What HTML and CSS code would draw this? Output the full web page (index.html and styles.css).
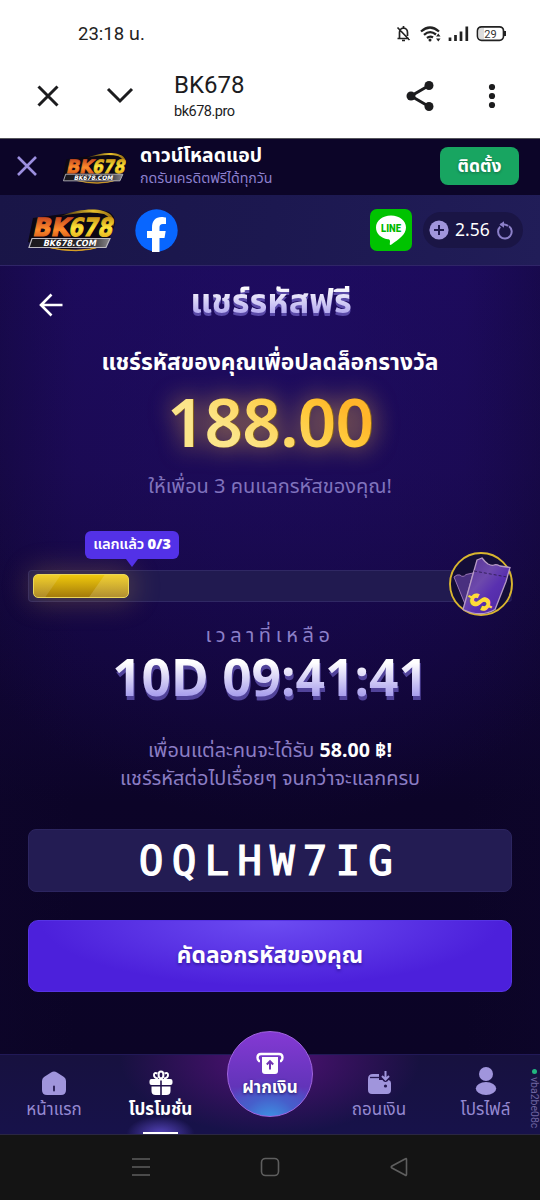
FILE: index.html
```html
<!DOCTYPE html>
<html lang="th">
<head>
<meta charset="utf-8">
<title>BK678</title>
<link rel="stylesheet" href="styles.css">
</head>
<body>
<svg class="defs" width="0" height="0">
  <defs>
    <linearGradient id="orange" x1="0" y1="0" x2="0" y2="1"><stop offset="0" stop-color="#b8361c"/><stop offset=".55" stop-color="#ff8b2c"/><stop offset="1" stop-color="#c8480f"/></linearGradient>
    <linearGradient id="gold" x1="0" y1="0" x2="0" y2="1"><stop offset="0" stop-color="#b87a08"/><stop offset=".5" stop-color="#ffe53a"/><stop offset="1" stop-color="#dd9c10"/></linearGradient>
    <linearGradient id="ring" x1="0" y1="0" x2="1" y2="0"><stop offset="0" stop-color="#3a2a10"/><stop offset=".6" stop-color="#e9c02c"/><stop offset="1" stop-color="#8b6410"/></linearGradient>
    <linearGradient id="plate" x1="0" y1="0" x2="1" y2="0"><stop offset="0" stop-color="#1a181c"/><stop offset=".75" stop-color="#2c2a2e"/><stop offset="1" stop-color="#8a888c"/></linearGradient>
    <linearGradient id="ticket" x1="0" y1="0" x2="1" y2="1"><stop offset="0" stop-color="#533091"/><stop offset=".4" stop-color="#6d49ac"/><stop offset=".6" stop-color="#5930b0"/><stop offset="1" stop-color="#4a25a0"/></linearGradient>
    <symbol id="brand" viewBox="0 0 90 44">
      <path d="M1 34 6 10 44 5Q68-1 82 4q8 5 5 15l-7 17-42 6Z" fill="#0c0713"/>
      <path d="M34 8C56-1 77 0 84 7q5 5 2 12-2-10-9-13Q62 2 34 8Z" fill="url(#ring)"/>
      <path d="M20 39q30 7 56-1-26 9-56 1Z" fill="#e2a725" stroke="#e2a725" stroke-width=".8"/>
      <g font-family="DejaVu Sans" font-weight="700" transform="skewX(-12)" stroke-width="1.100">
        <text x="11" y="28.500" font-size="25" textLength="37" lengthAdjust="spacingAndGlyphs" fill="url(#orange)" stroke="url(#orange)">BK</text>
        <text x="47" y="28.500" font-size="25" textLength="44" lengthAdjust="spacingAndGlyphs" fill="url(#gold)" stroke="url(#gold)">678</text>
      </g>
      <path d="M5 30.500H83L79 39.500H2Z" fill="url(#plate)" stroke="#bbb9c0" stroke-width="1.200"/>
      <g transform="skewX(-12)"><text x="24" y="38" font-family="DejaVu Sans" font-size="8.500" font-weight="700" textLength="53" lengthAdjust="spacingAndGlyphs" fill="#fff">BK678.COM</text></g>
    </symbol>
  </defs>
</svg>

<div class="status">
  <span class="clock">23:18 น.</span>
  <svg class="status-icons" width="112" height="20" viewBox="0 0 112 20" fill="none" stroke="#222">
    <path d="M1.500 14.500H13M3.500 14V8.500Q3.500 4.500 7.500 4q4 .5 4 4.500V12M7.500 2v2M6 16.500h3M1.500 3.500 13.500 16" stroke-width="1.700"/>
    <g stroke-width="2.300"><path d="M25 7.500Q34-.5 43 7.500M28 10.800Q34 5.500 40 10.500M31 14Q34 11.500 37 13.500"/></g>
    <circle cx="34" cy="16" r="1.500" fill="#222" stroke="none"/>
    <path d="M40 12.500 42.300 9.500 44.500 12.500ZM40 14.500 42.300 17.500 44.500 14.500Z" fill="#222" stroke="none"/>
    <path d="M54 17v-3.500M59.500 17v-6M65 17V7.500M70.800 17V2.500" stroke-width="2.700"/>
    <rect x="81.500" y="2.800" width="26" height="13.500" rx="4" stroke-width="1.700" fill="#fff"/>
    <path d="M84 4h4v11h-4q-1.500-1-1.500-4V8q0-3 1.500-4Z" fill="#ddd" stroke="none"/>
    <path d="M109 7v5" stroke-width="2"/>
    <text x="88.300" y="13.500" font-family="Roboto" font-size="11" fill="#333" stroke="none">29</text>
  </svg>
</div>

<div class="browser">
  <svg class="b-close" width="24" height="24" viewBox="0 0 24 24"><path d="M2.500 2.500 21.500 21.500M21.500 2.500 2.500 21.500" class="ink"/></svg>
  <svg class="b-down" width="28" height="24" viewBox="0 0 28 24"><path d="M2 5 14 17 26 5" class="ink"/></svg>
  <div class="site"><div class="site-name">BK678</div><div class="site-url">bk678.pro</div></div>
  <svg class="b-share" width="30" height="32" viewBox="0 0 30 32"><path d="M24 5.500 6 16 24 26.500" class="ink"/><g fill="#1c1c1e"><circle cx="24" cy="5.500" r="4.500"/><circle cx="6" cy="16" r="4.500"/><circle cx="24" cy="26.500" r="4.500"/></g></svg>
  <svg class="b-more" width="8" height="26" viewBox="0 0 8 26" fill="#1c1c1e"><circle cx="4" cy="4" r="3.100"/><circle cx="4" cy="13" r="3.100"/><circle cx="4" cy="22" r="3.100"/></svg>
</div>

<div class="install">
  <svg class="i-close" width="20" height="20" viewBox="0 0 20 20"><path d="M1 1 19 19M19 1 1 19" stroke="#9c8fe0" stroke-width="2.600"/></svg>
  <svg class="i-logo" width="66" height="34"><use href="#brand"/></svg>
  <div class="i-text"><div class="i-title">ดาวน์โหลดแอป</div><div class="i-sub">กดรับเครดิตฟรีได้ทุกวัน</div></div>
  <div class="i-btn">ติดตั้ง</div>
</div>

<div class="header">
  <svg class="h-logo" width="90" height="44"><use href="#brand"/></svg>
  <svg class="h-fb" width="43" height="43" viewBox="0 0 43 43"><circle cx="21.500" cy="21.500" r="21.200" fill="#0866ff"/><path d="M17 43V29H12v-7h5v-3.200C17 11.500 20.500 8 26.500 8c1.700 0 3.500.3 4.500.6V15h-3c-2.700 0-3.500 1.500-3.500 3.500V22h6.200l-1.200 7h-5v14Z" fill="#fff"/></svg>
  <svg class="h-line" width="42" height="42" viewBox="0 0 42 42"><rect width="42" height="42" rx="7" fill="#00c300"/><path d="M21 6.500c8.500 0 15 5.200 15 12 0 7-7.500 12-14.500 17-1.500 1-2 .5-1.600-1.500.5-3-.2-3.300-2-3.700C10.500 29 6 24.500 6 18.500 6 11.700 12.500 6.500 21 6.500Z" fill="#fff"/><text x="11" y="23" font-family="Roboto" font-size="10.500" font-weight="900" textLength="20" lengthAdjust="spacingAndGlyphs" fill="#00b900">LINE</text></svg>
  <div class="wallet">
    <svg width="20" height="20" viewBox="0 0 20 20"><circle cx="10" cy="10" r="9.600" fill="#a095dc"/><path d="M10 5v10M5 10h10" stroke="#201a50" stroke-width="2"/></svg>
    <span class="balance">2.56</span>
    <svg width="18" height="19" viewBox="0 0 18 19" fill="none" stroke="#8c80c9" stroke-width="2"><path d="M4.200 5.800A6.800 6.800 0 1 0 13 5.300M4.500 3.500H8.500Q11 3.800 12 5"/><path d="M8 .3V6.700L3.500 3.500Z" fill="#8c80c9" stroke="none"/></svg>
  </div>
</div>

<main class="promo">
  <div class="title-row">
    <svg class="back" width="24" height="24" viewBox="0 0 24 24" fill="none" stroke="#fff" stroke-width="2.600"><path d="M12.500 1.500 2 12 12.500 22.500M2 12H23.500"/></svg>
    <h1 class="title">แชร์รหัสฟรี</h1>
  </div>
  <h2 class="lead">แชร์รหัสของคุณเพื่อปลดล็อกรางวัล</h2>
  <div class="amount">188.00</div>
  <p class="invite">ให้เพื่อน 3 คนแลกรหัสของคุณ!</p>

  <div class="progress">
    <div class="track"><div class="fill"></div></div>
    <div class="tip">แลกแล้ว <b>0/3</b></div>
    <svg class="prize" width="66" height="66" viewBox="0 0 66 66">
      <circle cx="33" cy="33" r="31" fill="#140d38" stroke="#d9b52f" stroke-width="1.900"/>
      <path d="M6 26q3-3 6-2 3 3 6-.5L25 22 17 53Z" fill="#49307f" stroke="#9874b4"/>
      <path d="M29 9 34 7q3 4 6 6 4 2 6 1 2-1 6 1l10 1.500-4 14L47 58.500Q33 67 15 58.500Z" fill="url(#ticket)" stroke="#b69ac4" stroke-width="1.300"/>
      <path d="M26 20 59 26" stroke="#34205d" stroke-dasharray="3 2" fill="none"/>
      <g transform="translate(32.500 51) rotate(-64)"><text x="-8.500" y="9.500" font-family="Roboto" font-weight="900" font-size="28" fill="#ffdc37">$</text></g>
    </svg>
  </div>

  <p class="left-label">เวลาที่เหลือ</p>
  <div class="timer">10D 09:41:41</div>
  <p class="reward reward-a">เพื่อนแต่ละคนจะได้รับ <b>58.00 ฿!</b></p>
  <p class="reward reward-b">แชร์รหัสต่อไปเรื่อยๆ จนกว่าจะแลกครบ</p>
  <div class="code">OQLHW7IG</div>
  <div class="copy">คัดลอกรหัสของคุณ</div>
</main>

<nav class="tabs">
  <div class="tab home"><svg width="26" height="26" viewBox="0 0 26 26"><path d="M13 1.500q1.500 0 3 1l7 4.500q2 1.500 2 4v9q0 5-5 5H6q-5 0-5-5v-9q0-2.500 2-4l7-4.500q1.500-1 3-1Z" fill="#a095dc"/><path d="M13 16.500v4" stroke="#241950" stroke-width="1.800" stroke-linecap="round"/></svg><span>หน้าแรก</span></div>
  <div class="tab active"><svg width="26" height="26" viewBox="0 0 26 26" fill="#fff"><path d="M3.500 9H22.500q2 0 2 2v2q0 2-2 2H13.800V10.500H12.200V15H3.500q-2 0-2-2v-2q0-2 2-2ZM3.500 16.500h8.700V25H7.500q-4 0-4-4ZM13.800 16.500h8.700V21q0 4-4 4h-4.700Z"/><path d="M10 8.500Q6 8 6 5t3.500-1.500M16 8.500Q20 8 20 5t-3.500-1.500" fill="none" stroke="#fff" stroke-width="2"/><ellipse cx="13" cy="5" rx="2.400" ry="3.400" fill="none" stroke="#fff" stroke-width="2"/></svg><span>โปรโมชั่น</span></div>
  <div class="tab mid"><div class="deposit"><svg width="28" height="24" viewBox="0 0 28 24"><path d="M4 9H3Q1.500 8 1.500 5.500 1.500 2 5 2H23q3.500 0 3.500 3.500Q26.500 8 25 9h-1" fill="none" stroke="#fff" stroke-width="2.400"/><path d="M6 5H22V19q0 3-3 3H9q-3 0-3-3Z" fill="#fff"/><path d="M14 17.500V10M10.800 12.500 14 9.200 17.200 12.500" fill="none" stroke="#7234b4" stroke-width="2"/></svg><span>ฝากเงิน</span></div></div>
  <div class="tab out"><svg width="26" height="26" viewBox="0 0 26 26"><path d="M7 4H13V10H16.500q1 2 3 2t3-2q2.500.5 2.500 3v7q0 4-4 4H6q-4 0-4-4V9q0-5 5-5Z" fill="#a095dc"/><path d="M4 7.500H14" stroke="#251850" stroke-width="1.300"/><path d="M19.500 1v8M16 6l3.500 3.500L23 6" fill="none" stroke="#a095dc" stroke-width="2"/><circle cx="19.500" cy="16" r="1.600" fill="#251850"/></svg><span>ถอนเงิน</span></div>
  <div class="tab me"><svg width="26" height="30" viewBox="0 0 26 30" fill="#a095dc"><circle cx="13" cy="8" r="7"/><ellipse cx="13" cy="22.500" rx="10.200" ry="6.500"/></svg><span>โปรไฟล์</span></div>
  <div class="version"><i></i>vba2be08c</div>
</nav>

<div class="android">
  <svg width="20" height="20" viewBox="0 0 20 20"><path d="M1 2H19M1 10H19M1 18H19"/></svg>
  <svg width="20" height="20" viewBox="0 0 20 20"><rect x="1.500" y="1.500" width="17" height="17" rx="4"/></svg>
  <svg width="20" height="20" viewBox="0 0 20 20"><path d="M17.500 2.500V17.500Q17.500 19 16 18L3 11Q1.500 10 3 9L16 2q1.500-1 1.500.5Z"/></svg>
</div>
</body>
</html>
```

FILE: styles.css
```css
* { box-sizing: border-box; }
html, body { margin: 0; }
body {
  width: 540px;
  height: 1200px;
  overflow: hidden;
  display: flex;
  flex-direction: column;
  background: #fff;
  font-family: "Noto Sans", "Noto Sans Thai", "Open Sans", sans-serif;
  color: #fff;
}
h1, h2, p { margin: 0; font-weight: 400; white-space: nowrap; }
svg { display: block; flex: none; }
.defs { position: absolute; }
.ink { fill: none; stroke: #1c1c1e; stroke-width: 3; }

.status { flex: none; height: 60px; padding: 7px 32px 0 78px; display: flex; align-items: center; justify-content: space-between; color: #222; }
.clock { font: 18.500px Roboto, "Noto Sans Thai", sans-serif; }
.status-icons { margin-top: 1px; }
.browser { flex: none; height: 79px; display: flex; align-items: center; padding: 0 44px 7px 36px; color: #1c1c1e; border-bottom: 1px solid #55555b; }
.b-down { margin-left: 46px; }
.site { margin-left: 40px; flex: 1; font-family: Roboto, sans-serif; }
.site-name { font-size: 24px; line-height: 28px; margin-top: 1px; }
.site-url { font-size: 14.500px; line-height: 18px; margin-top: 4px; letter-spacing: -.5px; }
.b-more { margin-left: 53px; }

.install { flex: none; height: 56px; background: #0c0528; display: flex; align-items: center; padding: 0 21px 2px 17px; }
.i-logo { margin-left: 25px; margin-top: 4px; }
.i-text { margin-left: 12px; flex: 1; white-space: nowrap; }
.i-title { font-size: 19.400px; font-weight: 700; line-height: 22px; }
.i-sub { font-size: 14.200px; line-height: 20px; margin-top: 2px; color: #8d80cf; }
.i-btn { width: 79px; height: 38px; border-radius: 8px; background: #18a561; font-size: 17.500px; font-weight: 700; line-height: 36px; text-align: center; text-shadow: 0 1px 3px #0005; }

.header { flex: none; height: 71px; background: linear-gradient(100deg, #191547, #1c1850 50%, #211d58); border-bottom: 1px solid #302568; display: flex; align-items: center; padding: 0 17px 0 27px; }
.h-fb { margin-left: 18px; }
.h-line { margin-left: auto; }
.wallet { width: 100px; height: 36px; margin-left: 11px; border-radius: 18px; background: #1a1545; display: flex; align-items: center; padding-left: 7px; gap: 6px; }
.wallet svg { margin-left: -1px; }
.balance { font-size: 17.500px; line-height: 24px; width: 35px; margin: -2px 1px 0 0; }

.promo {
  flex: none;
  height: 788px;
  padding: 0 28px;
  display: flex;
  flex-direction: column;
  text-align: center;
  background:
    radial-gradient(ellipse 420px 480px at 52% 10%, #200d6699, transparent),
    linear-gradient(90deg, #0e062b66, transparent 14% 86%, #0e062b66),
    linear-gradient(#1b0a58, #19094d 26%, #12063b 49%, #0c0428 68%, #0b0426);
}
.title-row { height: 76px; display: flex; align-items: center; }
.back { margin: 2px 0 0 11px; }
.title { flex: 1; margin: -9px 33px 0 0; font-size: 34.300px; line-height: 60px; font-weight: 700; background: linear-gradient(#fff 28%, #afa4ee 75%); -webkit-background-clip: text; background-clip: text; color: transparent; filter: drop-shadow(0 3px 0 #5a4aa8); }
.lead { height: 40px; line-height: 40px; font-size: 22.800px; font-weight: 700; }
.amount { height: 80px; line-height: 80px; margin-top: -1px; font-size: 67px; letter-spacing: -.6px; font-weight: 600; background: linear-gradient(35deg, #fbe58a 40%, #ffca3c 58%, #ffb62a 66%); -webkit-background-clip: text; background-clip: text; color: transparent; filter: drop-shadow(1px 0 0 #87631c) drop-shadow(0 0 12px #d0984acc); }
.invite { height: 44px; line-height: 44px; margin-top: 3px; font-size: 20px; color: #8073bd; }

.progress { position: relative; height: 94px; padding-top: 62px; }
.track { height: 32px; padding: 3px 4px; border: 1px solid #302864; border-right: 0; border-radius: 4px; background: #211a50; }
.fill { width: 96px; height: 24px; border-radius: 5px; border: 1px solid #ead659; background: linear-gradient(125deg, #ffffff20 0 24%, transparent 25% 64%, #ffffff28 65%), linear-gradient(#f0c90c, #a47b0b); box-shadow: 0 0 28px 4px #b88e3e55; }
.tip { position: absolute; left: 57px; top: 23px; width: 94px; height: 28px; border-radius: 6px; background: #5331e7; font-size: 14.800px; line-height: 25px; font-weight: 600; letter-spacing: -.2px; white-space: nowrap; }
.tip::after { content: ""; position: absolute; left: 41px; top: 28px; border: 6px solid transparent; border-top: 8px solid #5331e7; border-bottom: 0; }
.prize { position: absolute; left: 420px; top: 43px; }

.left-label { height: 27px; line-height: 27px; margin-top: 19px; font-size: 20px; letter-spacing: 4.600px; color: #8d80c9; }
.timer { height: 69px; line-height: 69px; margin-top: -6px; font-size: 51.500px; font-weight: 700; background: linear-gradient(#fff 30%, #aaa0ed 77%); -webkit-background-clip: text; background-clip: text; color: transparent; filter: drop-shadow(1px 4px 0 #51439a); white-space: nowrap; }
.reward { font-size: 19.900px; line-height: 28px; color: #8b7dc4; }
.reward-a { margin-top: 25px; }
.reward b { color: #fff; font-size: 19.600px; }
.code { height: 63px; margin-top: 37px; border: 1px solid #2c2560; border-radius: 8px; background: #231c53; font: 400 41px/62px "DejaVu Sans Mono", monospace; letter-spacing: 8.100px; -webkit-text-stroke: 1.200px #fff; }
.copy { height: 72px; margin-top: 28px; border-radius: 10px; border: 1px solid #5634e4; background: radial-gradient(ellipse 230px 65px at 50% 0, #6c4cf2, #4c20db); font-size: 22.800px; line-height: 67px; font-weight: 700; text-shadow: 0 2px 3px #1c087388; }

.tabs { position: relative; flex: none; height: 81px; display: flex; padding-top: 12px; background: radial-gradient(ellipse 150px 75px at 50% 5%, #501176, transparent), linear-gradient(#17113f, #17124a); border-bottom: 1px solid #2a2742; border-top: 1px solid #211957; }
.tab { width: 108px; height: 67px; display: flex; flex-direction: column; align-items: center; font-size: 17px; line-height: 25px; color: #9589d1; white-space: nowrap; }
.tab svg { margin-top: 3px; }
.me svg { margin-top: -1px; }
.active { width: 105px; color: #fff; font-weight: 700; background: linear-gradient(#fff, #fff) 50% 100% / 35px 2px no-repeat, radial-gradient(ellipse 34px 18px at 50% 100%, #5645bd, transparent); }
.mid { width: 114px; }
.out { width: 104px; }
.me { width: 109px; }
.deposit { width: 86px; height: 86px; margin-top: -36px; padding-top: 17px; border-radius: 50%; display: flex; flex-direction: column; align-items: center; color: #fff; font-weight: 700; line-height: 21px; border: 1px solid #a064df; background: radial-gradient(circle at 50% 112%, #3aa5ec, #465fcb 28%, transparent 48%), linear-gradient(#8439d4, #6234b9 65%, #4264cf); text-shadow: 0 1px 3px #241464; }
.version { position: absolute; left: 528px; top: 14px; height: 64px; width: 12px; display: flex; align-items: center; gap: 3px; writing-mode: vertical-rl; font: 10.500px/12px Roboto, sans-serif; color: #6e64a0; }
.version i { width: 5px; height: 5px; border-radius: 50%; background: #22b680; }

.android { flex: 1; background: #141414; display: flex; justify-content: center; gap: 109px; padding-top: 22px; }
.android svg { fill: none; stroke: #5e5e5e; stroke-width: 1.600; }
```
